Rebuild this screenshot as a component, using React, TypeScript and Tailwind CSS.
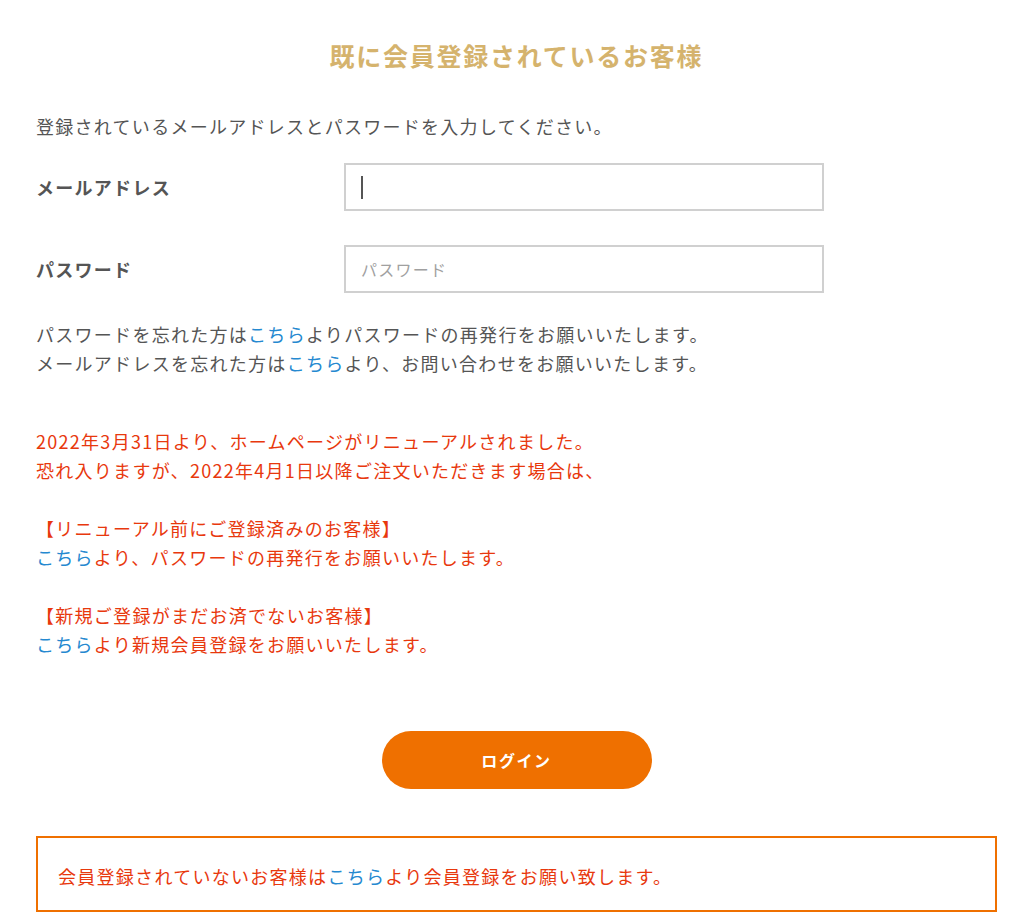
import { useEffect, useRef } from "react";

const FONT = "font-['Noto_Sans_CJK_JP','Noto_Sans',sans-serif]";

function Link({ children }: { children: React.ReactNode }) {
  return (
    <a href="#" className="text-[#2589d0] no-underline">
      {children}
    </a>
  );
}

export default function App() {
  const emailRef = useRef<HTMLInputElement>(null);

  useEffect(() => {
    emailRef.current?.focus();
  }, []);

  return (
    <div className={`${FONT} min-h-screen bg-white text-[#555] tracking-[0.08em]`}>
      <div className="ml-[36px] w-[961px] pt-[37px] pb-[11px]">
        <h2 className="text-center text-[25px] font-bold leading-[36px] tracking-[0.07em] text-[#d5b36d]">
          既に会員登録されているお客様
        </h2>

        <p className="mt-[39px] text-[18px] leading-[29px]">
          登録されているメールアドレスとパスワードを入力してください。
        </p>

        <form className="mt-[22px] flex flex-col gap-[34px]">
          <div className="grid grid-cols-[308px_480px] items-center">
            <label htmlFor="email" className="text-[18px] font-bold">
              メールアドレス
            </label>
            <div className="relative">
              <input
                id="email"
                ref={emailRef}
                type="email"
                className="h-[48px] w-full border-2 border-[#d0d0d0] bg-white px-[15px] text-[16px] text-[#333] caret-transparent outline-none"
              />
              {/* text cursor seen in the focused field */}
              <span className="pointer-events-none absolute left-[17px] top-[13px] h-[23px] w-[2px] bg-[#555]" />
            </div>
          </div>
          <div className="grid grid-cols-[308px_480px] items-center">
            <label htmlFor="password" className="text-[18px] font-bold">
              パスワード
            </label>
            <input
              id="password"
              type="password"
              placeholder="パスワード"
              className="h-[48px] border-2 border-[#d0d0d0] bg-white px-[15px] text-[16px] text-[#333] outline-none placeholder:text-[#a0a0a0]"
            />
          </div>
        </form>

        <div className="mt-[27px] text-[18px] leading-[29px]">
          <p>
            パスワードを忘れた方は<Link>こちら</Link>よりパスワードの再発行をお願いいたします。
          </p>
          <p>
            メールアドレスを忘れた方は<Link>こちら</Link>より、お問い合わせをお願いいたします。
          </p>
        </div>

        <div className="mt-[49px] text-[18px] leading-[29px] text-[#e8380d]">
          <p>2022年3月31日より、ホームページがリニューアルされました。</p>
          <p>恐れ入りますが、2022年4月1日以降ご注文いただきます場合は、</p>
          <p className="h-[29px]" />
          <p>【リニューアル前にご登録済みのお客様】</p>
          <p>
            <Link>こちら</Link>より、パスワードの再発行をお願いいたします。
          </p>
          <p className="h-[29px]" />
          <p>【新規ご登録がまだお済でないお客様】</p>
          <p>
            <Link>こちら</Link>より新規会員登録をお願いいたします。
          </p>
        </div>

        <div className="mt-[72px] flex justify-center">
          <button
            type="button"
            className="h-[58px] w-[270px] rounded-full bg-[#ef7000] text-[16px] font-bold tracking-[0.1em] text-white"
          >
            ログイン
          </button>
        </div>

        <div className="mt-[47px] flex h-[76px] items-center border-2 border-[#ef7000] pl-[20px] pt-[5px] text-[18px] text-[#e8380d]">
          <p>
            会員登録されていないお客様は<Link>こちら</Link>より会員登録をお願い致します。
          </p>
        </div>
      </div>
    </div>
  );
}
